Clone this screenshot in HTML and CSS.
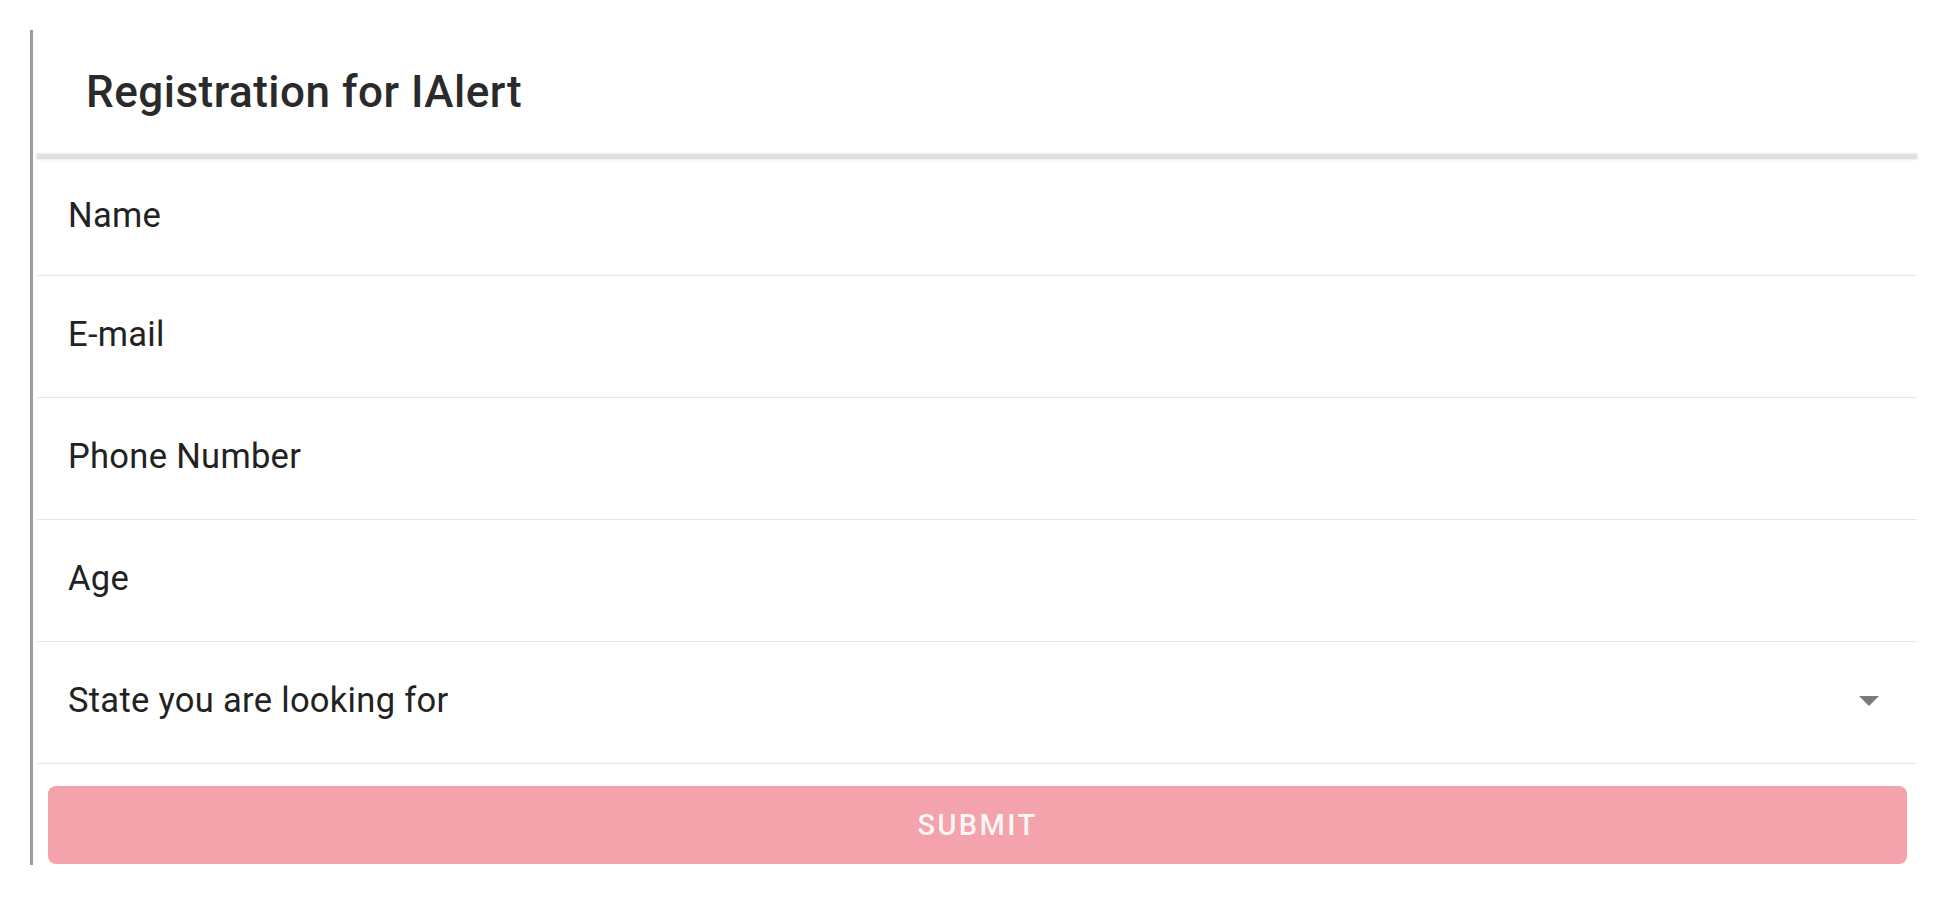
FILE: index.html
```html
<!DOCTYPE html>
<html lang="en">
<head>
<meta charset="utf-8">
<title>Registration for IAlert</title>
<link rel="stylesheet" href="styles.css">
</head>
<body>
<div class="card">
  <header class="card-header">
    <h1 class="title">Registration for IAlert</h1>
  </header>
  <div class="divider-thick"></div>
  <form class="form">
    <div class="row row-first"><span class="label">Name</span></div>
    <div class="row"><span class="label">E-mail</span></div>
    <div class="row"><span class="label">Phone Number</span></div>
    <div class="row"><span class="label">Age</span></div>
    <div class="row row-select">
      <span class="label">State you are looking for</span>
      <svg class="arrow" width="20" height="10" viewBox="0 0 20 10"><path d="M0 0 L20 0 L10 10 Z" fill="#7a7a7a"/></svg>
    </div>
    <div class="actions">
      <button type="button" class="submit">Submit</button>
    </div>
  </form>
</div>
</body>
</html>
```

FILE: styles.css
```css
html, body {
  margin: 0;
  padding: 0;
  background: #ffffff;
}

body {
  font-family: Roboto, "Liberation Sans", Arial, sans-serif;
  color: #212121;
}

.card {
  margin: 30px 0 0 30px;
  width: 1886px;
  height: 835px;
  border-left: 3px solid #9c9c9c;
  display: flex;
  flex-direction: column;
}

.card-header {
  height: 123px;
  display: flex;
  align-items: center;
  padding-left: 53px;
}

.title {
  margin: 0;
  font-size: 44px;
  font-weight: 500;
  line-height: 1;
  color: #2a2a2a;
  letter-spacing: 0.5px;
}

.divider-thick {
  height: 5px;
  margin: 1px 2px 1px 4px;
  background: #e0e0e0;
  box-shadow: 0 0 2px 1px #ececec;
}

.form {
  display: flex;
  flex-direction: column;
}

.row {
  height: 121px;
  margin: 0 2px 0 4px;
  border-bottom: 1px solid #e6e6e6;
  display: flex;
  align-items: center;
  padding-left: 31px;
  padding-right: 38px;
}

.row-first {
  height: 115px;
}

.row-select {
  justify-content: space-between;
}

.label {
  font-size: 34.5px;
  font-weight: 400;
  color: #222222;
  line-height: 1;
  letter-spacing: 0.3px;
  margin-top: -4px;
}

.arrow {
  display: block;
  margin-top: -4px;
}

.actions {
  padding: 22px 12px 0 15px;
}

.submit {
  display: block;
  width: 100%;
  height: 78px;
  border: none;
  border-radius: 8px;
  background: #f4a2ac;
  color: rgba(255, 255, 255, 0.92);
  font-family: Roboto, "Liberation Sans", Arial, sans-serif;
  font-size: 29px;
  font-weight: 500;
  letter-spacing: 2.4px;
  text-transform: uppercase;
  cursor: pointer;
}
```
